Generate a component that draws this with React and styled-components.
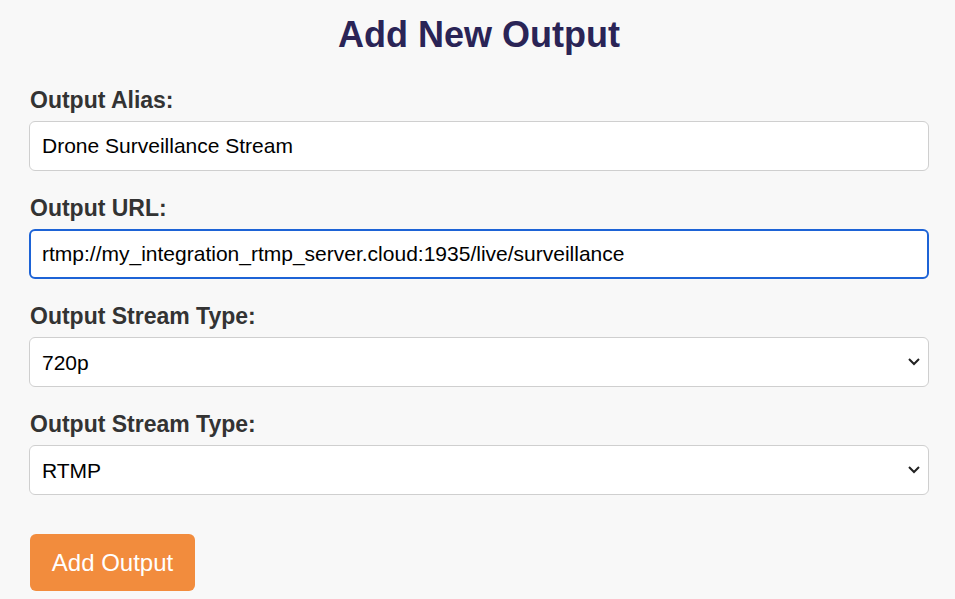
import React from 'react';
import styled, { createGlobalStyle } from 'styled-components';

const Global = createGlobalStyle`
  body {
    margin: 0;
    background: #f8f8f8;
    font-family: "Liberation Sans", Arial, sans-serif;
  }
`;

const Page = styled.div`
  width: 900px;
  margin-left: 29px;
  padding-top: 14px;
`;

const Title = styled.h1`
  margin: 0 0 32px;
  font-size: 36px;
  line-height: 42px;
  text-align: center;
  color: #2a2456;
  font-weight: 700;
`;

const Group = styled.div`
  display: flex;
  flex-direction: column;
  margin-bottom: 25px;
`;

const Label = styled.label`
  font-size: 23px;
  line-height: 24px;
  font-weight: 700;
  color: #333;
  margin: 0 0 9px 1px;
`;

const Input = styled.input`
  box-sizing: border-box;
  height: 50px;
  width: 100%;
  padding: 0 ${({ $focused }) => ($focused ? 11 : 12)}px;
  font-family: "Liberation Sans", Arial, sans-serif;
  font-size: 21px;
  color: #000;
  background: #fff;
  border: ${({ $focused }) => ($focused ? '2px solid #1d63d6' : '1px solid #cfcfcf')};
  border-radius: 6px;
  outline: none;
`;

const SelectWrap = styled.div`
  position: relative;
`;

const Select = styled.select`
  appearance: none;
  box-sizing: border-box;
  height: 50px;
  width: 100%;
  padding: 0 12px;
  font-family: "Liberation Sans", Arial, sans-serif;
  font-size: 21px;
  color: #000;
  background: #fff;
  border: 1px solid #cfcfcf;
  border-radius: 6px;
`;

const Chevron = styled.svg`
  position: absolute;
  right: 8px;
  top: 19px;
  pointer-events: none;
`;

const Button = styled.button`
  margin-top: 14px;
  width: 165px;
  height: 57px;
  background: #f28c3d;
  color: #fff;
  border: none;
  border-radius: 6px;
  font-family: "Liberation Sans", Arial, sans-serif;
  font-size: 24px;
  margin-left: 1px;
`;

function Dropdown({ value }) {
  return (
    <SelectWrap>
      <Select defaultValue={value}>
        <option>{value}</option>
      </Select>
      <Chevron width="14" height="10" viewBox="0 0 14 10">
        <path d="M2 3l5 5 5-5" fill="none" stroke="#222" strokeWidth="2" />
      </Chevron>
    </SelectWrap>
  );
}

export default function App() {
  return (
    <>
      <Global />
      <Page>
        <Title>Add New Output</Title>
        <Group>
          <Label>Output Alias:</Label>
          <Input defaultValue="Drone Surveillance Stream" />
        </Group>
        <Group>
          <Label>Output URL:</Label>
          <Input $focused autoFocus defaultValue="rtmp://my_integration_rtmp_server.cloud:1935/live/surveillance" />
        </Group>
        <Group>
          <Label>Output Stream Type:</Label>
          <Dropdown value="720p" />
        </Group>
        <Group>
          <Label>Output Stream Type:</Label>
          <Dropdown value="RTMP" />
        </Group>
        <Button>Add Output</Button>
      </Page>
    </>
  );
}
